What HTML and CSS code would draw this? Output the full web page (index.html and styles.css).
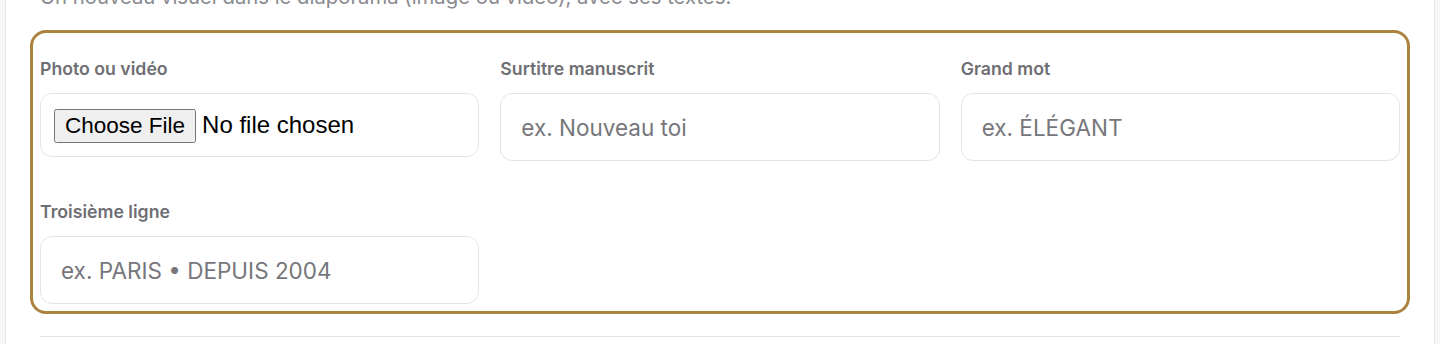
FILE: index.html
```html
<!DOCTYPE html>
<html lang="fr">
<head>
    <meta charset="UTF-8">
    <meta name="viewport" content="width=device-width, initial-scale=1.0">
    <title>Diaporama</title>
<link rel="stylesheet" href="styles.css">
</head>
<body>

    <div class="panel">
        <p class="hint">Un nouveau visuel dans le diaporama (image ou vidéo), avec ses textes.</p>

        <div class="slide-new">
            <div class="field">
                <label>Photo ou vidéo</label>
                <input type="file" class="file-input">
            </div>
            <div class="field">
                <label>Surtitre manuscrit</label>
                <input type="text" class="text-input" placeholder="ex. Nouveau toi">
            </div>
            <div class="field">
                <label>Grand mot</label>
                <input type="text" class="text-input" placeholder="ex. ÉLÉGANT">
            </div>
            <div class="field">
                <label>Troisième ligne</label>
                <input type="text" class="text-input" placeholder="ex. PARIS • DEPUIS 2004">
            </div>
        </div>

        <hr class="divider">
    </div>

</body>
</html>
```

FILE: styles.css
```css
* {
    padding: 0;
    margin: 0;
    box-sizing: border-box;
}

body {
    background-color: #f6f6f7;
    font-family: Inter, "Liberation Sans", sans-serif;
    padding: 0 5px;
    overflow: hidden;
}

.panel {
    background-color: white;
    border: 1px solid #e7e7ea;
    border-top: none;
    margin-top: -17px;
    padding: 0 34px 40px 34px;
}

.hint {
    color: #8a8a90;
    font-size: 20.3px;
    line-height: 28px;
}

.slide-new {
    margin: 19px -10px 0 -10px;
    border: 3px solid #a8843f;
    border-radius: 16px;
    padding: 25px 7px 7px 7px;
    display: grid;
    grid-template-columns: repeat(3, minmax(0, 1fr));
    column-gap: 21px;
    row-gap: 40px;
}

.field {
    display: flex;
    flex-direction: column;
    min-width: 0;
}

.field label {
    color: #6e6e73;
    font-size: 17.7px;
    font-weight: 600;
    line-height: 22px;
    margin-bottom: 13px;
}

.text-input {
    width: 100%;
    height: 68px;
    border: 1px solid #e4e4e7;
    border-radius: 12px;
    padding: 0 20px;
    font-family: Inter, "Liberation Sans", sans-serif;
    font-size: 22.5px;
    color: #333;
    outline: none;
}

.text-input::placeholder {
    color: #76767b;
}

.file-input {
    width: 100%;
    min-width: 0;
    height: 64px;
    border: 1px solid #e4e4e7;
    border-radius: 12px;
    padding: 0 13px;
    font-family: "Liberation Sans", Arial, sans-serif;
    font-size: 24px;
    color: black;
}

.file-input::file-selector-button {
    font-family: "Liberation Sans", Arial, sans-serif;
    font-size: 22.5px;
    height: 34px;
    padding: 0 9px;
    margin: 15px 6px 0 0;
}

.divider {
    border: none;
    border-top: 1px solid #e4e4e7;
    margin-top: 22px;
}
```
